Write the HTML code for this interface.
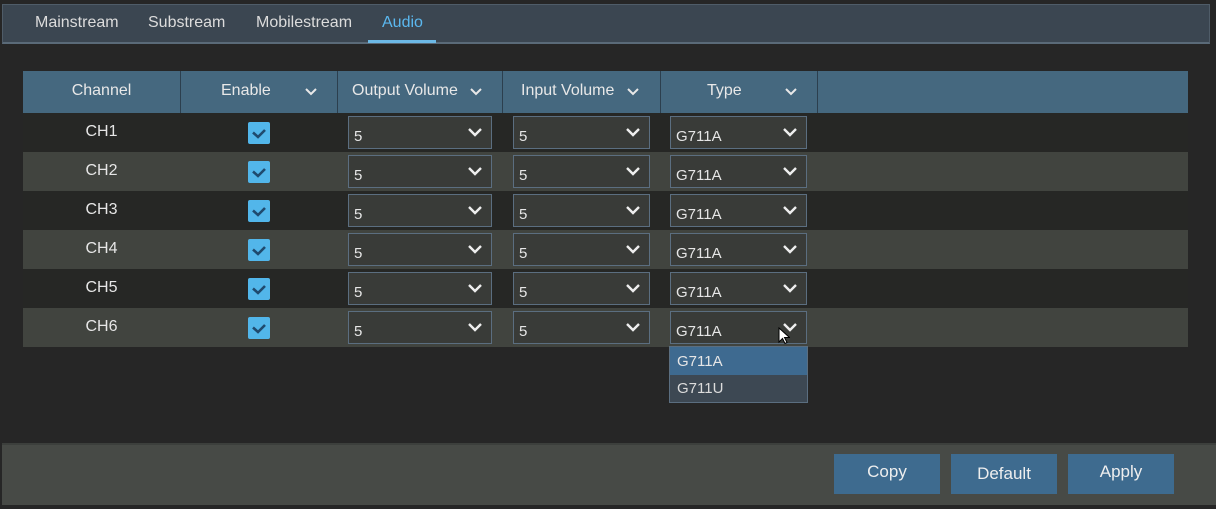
<!DOCTYPE html>
<html><head><meta charset="utf-8"><style>
*{margin:0;padding:0;box-sizing:border-box}
body{width:1216px;height:509px;background:#262626;position:relative;overflow:hidden;font-family:"Liberation Sans",sans-serif;color:#e6e6e6}
.a{position:absolute}
.tabs{left:2px;top:4px;width:1208px;height:40px;background:#3b4651;border:1px solid #4f5c68;border-bottom:2px solid #5a6a78}
.tab{top:14px;font-size:16px;color:#dcdcdc}
.hdr{left:23px;top:71px;width:1165px;height:42px;background:#45687f}
.hc{top:0;height:42px;border-right:1px solid #2c3f4e;font-size:16px;line-height:40px;color:#e8e8e8}
.row{left:23px;width:1165px;height:39px}
.ch{font-size:16px;width:157px;text-align:center;left:0;top:10px}
.cb{left:225px;width:22px;height:22px;background:#52b6ea;border-radius:2px;top:9px}
.sel{height:33px;top:3px;background:#393b38;border:1px solid #5b6e80;font-size:15px;padding:11px 0 0 5px}
.chev{position:absolute;right:9px;top:11px}
.btn{top:454px;width:106px;height:40px;background:#3e6b8f;font-size:17px;text-align:center;line-height:36px;color:#eee}
</style></head><body>
<div class="a tabs"></div>
<div class="a tab" style="left:35px">Mainstream</div>
<div class="a tab" style="left:148px">Substream</div>
<div class="a tab" style="left:256px">Mobilestream</div>
<div class="a tab" style="left:382px;color:#5bb8ef">Audio</div>
<div class="a" style="left:368px;top:40px;width:68px;height:3px;background:#6cb9e6"></div>

<div class="a hdr">
<div class="a hc" style="left:0;width:158px;text-align:center">Channel</div>
<div class="a hc" style="left:158px;width:157px"><span class="a" style="left:40px">Enable</span><svg class="a" style="left:124px;top:17px" width="12" height="8"><path d="M1 1l5 5 5-5" stroke="#e8e8e8" stroke-width="2" fill="none"/></svg></div>
<div class="a hc" style="left:315px;width:165px"><span class="a" style="left:14px">Output Volume</span><svg class="a" style="left:132px;top:17px" width="12" height="8"><path d="M1 1l5 5 5-5" stroke="#e8e8e8" stroke-width="2" fill="none"/></svg></div>
<div class="a hc" style="left:480px;width:158px"><span class="a" style="left:18px">Input Volume</span><svg class="a" style="left:124px;top:17px" width="12" height="8"><path d="M1 1l5 5 5-5" stroke="#e8e8e8" stroke-width="2" fill="none"/></svg></div>
<div class="a hc" style="left:638px;width:157px"><span class="a" style="left:46px">Type</span><svg class="a" style="left:124px;top:17px" width="12" height="8"><path d="M1 1l5 5 5-5" stroke="#e8e8e8" stroke-width="2" fill="none"/></svg></div>
</div>

<div class="a row" style="top:113px;background:#262725">
<div class="a ch">CH1</div><div class="a cb"><svg width="22" height="22"><path d="M5 10.5l5 4.5 7-7" stroke="#1f4a6e" stroke-width="2.6" fill="none"/></svg></div>
<div class="a sel" style="left:325px;width:144px">5<svg class="chev" width="14" height="9"><path d="M1 1l6 6 6-6" stroke="#eee" stroke-width="2.4" fill="none"/></svg></div>
<div class="a sel" style="left:490px;width:137px">5<svg class="chev" width="14" height="9"><path d="M1 1l6 6 6-6" stroke="#eee" stroke-width="2.4" fill="none"/></svg></div>
<div class="a sel" style="left:647px;width:137px">G711A<svg class="chev" width="14" height="9"><path d="M1 1l6 6 6-6" stroke="#eee" stroke-width="2.4" fill="none"/></svg></div>
</div>
<div class="a row" style="top:152px;background:#41443f">
<div class="a ch">CH2</div><div class="a cb"><svg width="22" height="22"><path d="M5 10.5l5 4.5 7-7" stroke="#1f4a6e" stroke-width="2.6" fill="none"/></svg></div>
<div class="a sel" style="left:325px;width:144px">5<svg class="chev" width="14" height="9"><path d="M1 1l6 6 6-6" stroke="#eee" stroke-width="2.4" fill="none"/></svg></div>
<div class="a sel" style="left:490px;width:137px">5<svg class="chev" width="14" height="9"><path d="M1 1l6 6 6-6" stroke="#eee" stroke-width="2.4" fill="none"/></svg></div>
<div class="a sel" style="left:647px;width:137px">G711A<svg class="chev" width="14" height="9"><path d="M1 1l6 6 6-6" stroke="#eee" stroke-width="2.4" fill="none"/></svg></div>
</div>
<div class="a row" style="top:191px;background:#262725">
<div class="a ch">CH3</div><div class="a cb"><svg width="22" height="22"><path d="M5 10.5l5 4.5 7-7" stroke="#1f4a6e" stroke-width="2.6" fill="none"/></svg></div>
<div class="a sel" style="left:325px;width:144px">5<svg class="chev" width="14" height="9"><path d="M1 1l6 6 6-6" stroke="#eee" stroke-width="2.4" fill="none"/></svg></div>
<div class="a sel" style="left:490px;width:137px">5<svg class="chev" width="14" height="9"><path d="M1 1l6 6 6-6" stroke="#eee" stroke-width="2.4" fill="none"/></svg></div>
<div class="a sel" style="left:647px;width:137px">G711A<svg class="chev" width="14" height="9"><path d="M1 1l6 6 6-6" stroke="#eee" stroke-width="2.4" fill="none"/></svg></div>
</div>
<div class="a row" style="top:230px;background:#41443f">
<div class="a ch">CH4</div><div class="a cb"><svg width="22" height="22"><path d="M5 10.5l5 4.5 7-7" stroke="#1f4a6e" stroke-width="2.6" fill="none"/></svg></div>
<div class="a sel" style="left:325px;width:144px">5<svg class="chev" width="14" height="9"><path d="M1 1l6 6 6-6" stroke="#eee" stroke-width="2.4" fill="none"/></svg></div>
<div class="a sel" style="left:490px;width:137px">5<svg class="chev" width="14" height="9"><path d="M1 1l6 6 6-6" stroke="#eee" stroke-width="2.4" fill="none"/></svg></div>
<div class="a sel" style="left:647px;width:137px">G711A<svg class="chev" width="14" height="9"><path d="M1 1l6 6 6-6" stroke="#eee" stroke-width="2.4" fill="none"/></svg></div>
</div>
<div class="a row" style="top:269px;background:#262725">
<div class="a ch">CH5</div><div class="a cb"><svg width="22" height="22"><path d="M5 10.5l5 4.5 7-7" stroke="#1f4a6e" stroke-width="2.6" fill="none"/></svg></div>
<div class="a sel" style="left:325px;width:144px">5<svg class="chev" width="14" height="9"><path d="M1 1l6 6 6-6" stroke="#eee" stroke-width="2.4" fill="none"/></svg></div>
<div class="a sel" style="left:490px;width:137px">5<svg class="chev" width="14" height="9"><path d="M1 1l6 6 6-6" stroke="#eee" stroke-width="2.4" fill="none"/></svg></div>
<div class="a sel" style="left:647px;width:137px">G711A<svg class="chev" width="14" height="9"><path d="M1 1l6 6 6-6" stroke="#eee" stroke-width="2.4" fill="none"/></svg></div>
</div>
<div class="a row" style="top:308px;background:#41443f">
<div class="a ch">CH6</div><div class="a cb"><svg width="22" height="22"><path d="M5 10.5l5 4.5 7-7" stroke="#1f4a6e" stroke-width="2.6" fill="none"/></svg></div>
<div class="a sel" style="left:325px;width:144px">5<svg class="chev" width="14" height="9"><path d="M1 1l6 6 6-6" stroke="#eee" stroke-width="2.4" fill="none"/></svg></div>
<div class="a sel" style="left:490px;width:137px">5<svg class="chev" width="14" height="9"><path d="M1 1l6 6 6-6" stroke="#eee" stroke-width="2.4" fill="none"/></svg></div>
<div class="a sel" style="left:647px;width:137px">G711A<svg class="chev" width="14" height="9"><path d="M1 1l6 6 6-6" stroke="#eee" stroke-width="2.4" fill="none"/></svg></div>
</div>

<div class="a" style="left:669px;top:346px;width:139px;height:57px;border:1px solid #5b6e80;background:#3d4853">
<div style="height:28px;background:#3e6a90;font-size:15px;padding:6px 0 0 7px">G711A</div>
<div style="font-size:15px;padding:5px 0 0 7px;color:#dcdcdc">G711U</div>
</div>
<svg class="a" style="left:778px;top:327px" width="12" height="18"><path d="M1 1v14l3.5-3.5 2.5 5 2-1-2.5-5h5z" fill="#fff" stroke="#000" stroke-width="1"/></svg>

<div class="a" style="left:2px;top:443px;width:1214px;height:62px;background:#474a46;border-top:2px solid #3c3f3c"></div>
<div class="a btn" style="left:834px">Copy</div>
<div class="a btn" style="left:951px;line-height:40px">Default</div>
<div class="a btn" style="left:1068px">Apply</div>
</body></html>
